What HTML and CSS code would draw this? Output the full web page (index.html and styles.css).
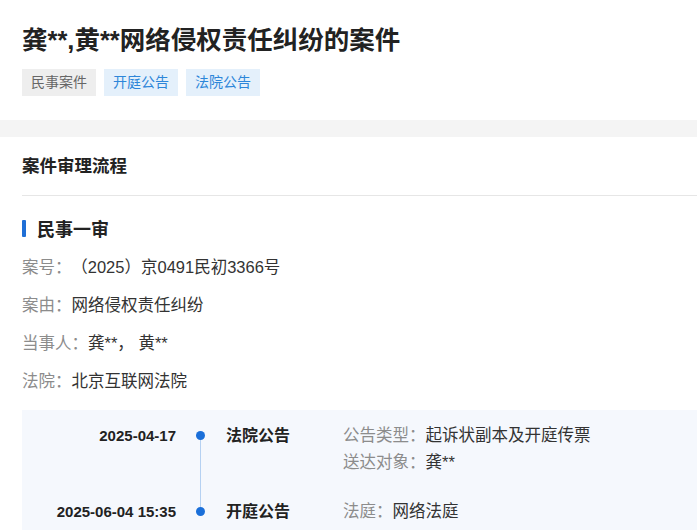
FILE: index.html
```html
<!DOCTYPE html>
<html lang="zh">
<head>
<meta charset="utf-8">
<link rel="stylesheet" href="styles.css">
</head>
<body>
<div class="header">
  <h1 class="title">龚**,黄**网络侵权责任纠纷的案件</h1>
  <div class="tags">
    <span class="tag tag-gray">民事案件</span>
    <span class="tag tag-blue">开庭公告</span>
    <span class="tag tag-blue">法院公告</span>
  </div>
</div>
<div class="band"></div>
<div class="section">
  <div class="section-title">案件审理流程</div>
  <div class="stage"><span class="stage-bar"></span>民事一审</div>
  <div class="info">
    <div class="row"><span class="label">案号：</span><span class="value case-no">（2025）京0491民初3366号</span></div>
    <div class="row"><span class="label">案由：</span><span class="value">网络侵权责任纠纷</span></div>
    <div class="row"><span class="label">当事人：</span><span class="value">龚**， 黄**</span></div>
    <div class="row"><span class="label">法院：</span><span class="value">北京互联网法院</span></div>
  </div>
  <div class="timeline">
    <div class="item">
      <div class="date">2025-04-17</div>
      <div class="axis has-line"><span class="dot"></span></div>
      <div class="kind">法院公告</div>
      <div class="detail">
        <div><span class="label">公告类型：</span><span class="value">起诉状副本及开庭传票</span></div>
        <div><span class="label">送达对象：</span><span class="value">龚**</span></div>
      </div>
    </div>
    <div class="item">
      <div class="date">2025-06-04 15:35</div>
      <div class="axis"><span class="dot"></span></div>
      <div class="kind">开庭公告</div>
      <div class="detail">
        <div><span class="label">法庭：</span><span class="value">网络法庭</span></div>
      </div>
    </div>
  </div>
</div>
</body>
</html>
```

FILE: styles.css
```css
* { box-sizing: border-box; }
html, body { margin: 0; padding: 0; background: #fff; }
body {
  font-family: "Liberation Sans", "Noto Sans CJK SC", sans-serif;
  color: #333;
  width: 697px;
  height: 531px;
  overflow: hidden;
}
.header { padding: 24px 22px 0; }
.title {
  margin: 0;
  font-size: 25.5px;
  line-height: 32px;
  font-weight: 700;
  color: #222;
}
.tags { display: flex; gap: 8px; margin-top: 13px; }
.tag {
  display: inline-block;
  height: 27px;
  line-height: 27px;
  padding: 0 9px;
  font-size: 14px;
}
.tag-gray { background: #eeeeee; color: #666; }
.tag-blue { background: #e4f0fb; color: #2d86d9; }
.band { height: 17px; background: #f4f4f4; margin-top: 24px; }
.section { padding-left: 22px; }
.section-title {
  font-size: 17.5px;
  font-weight: 700;
  line-height: 22px;
  padding: 18px 0 18px;
  border-bottom: 1px solid #e6e6e6;
  color: #222;
}
.stage {
  display: flex;
  align-items: center;
  margin-top: 22px;
  height: 20px;
  font-size: 18px;
  font-weight: 700;
  color: #222;
}
.stage-bar {
  width: 4px;
  height: 17px;
  background: #1f6fd6;
  margin-right: 11px;
  border-radius: 1px;
}
.info { margin-top: 10px; }
.row { line-height: 38px; font-size: 16.5px; }
.label { color: #8c8c8c; }
.value { color: #333; }
.case-no { margin-left: 8px; }
.timeline {
  margin-top: 10px;
  background: #f5f8fd;
  padding-top: 12px;
  height: 120px;
}
.item {
  display: grid;
  grid-template-columns: 154px 50px 117px 1fr;
  margin-bottom: 22px;
  line-height: 27px;
}
.date {
  text-align: right;
  font-size: 15px;
  font-weight: 700;
  color: #222;
}
.axis { position: relative; }
.dot {
  position: absolute;
  left: 20px;
  top: 9px;
  width: 9px;
  height: 9px;
  border-radius: 50%;
  background: #1a6fd9;
  z-index: 1;
}
.axis.has-line::after {
  content: "";
  position: absolute;
  left: 24px;
  top: 13px;
  width: 1px;
  height: calc(100% + 22px);
  background: #b5d1f2;
}
.kind { font-size: 16px; font-weight: 700; color: #222; }
.detail { font-size: 16.5px; }
```
